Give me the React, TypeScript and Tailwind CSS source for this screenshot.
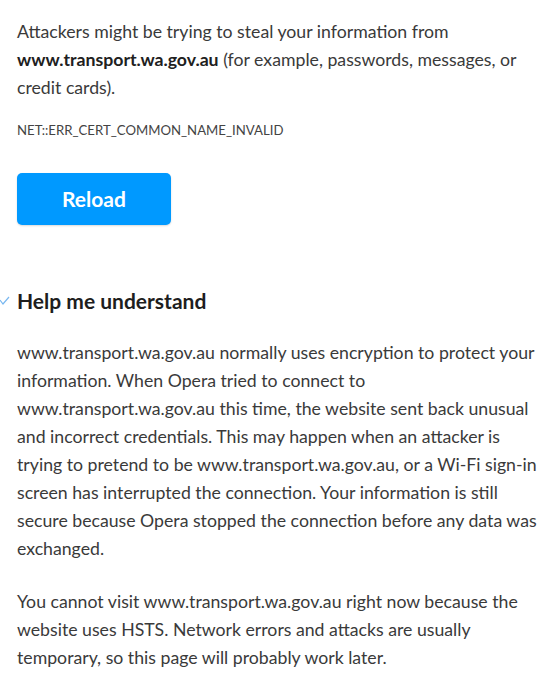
const host = 'www.transport.wa.gov.au';

export default function App() {
  return (
    <div className="min-h-screen bg-white font-['Lato',sans-serif] text-[17.7px] text-[#3a3a3a]">
      <div className="w-[539px] pl-[17px] pt-[18px] pb-8">
        <p className="leading-[28px]">
          Attackers might be trying to steal your information from
          <br />
          <strong className="font-bold text-[#202020]">{host}</strong> (for example, passwords, messages, or
          <br />
          credit cards).
        </p>

        <div className="mt-[18px] text-[13.2px] leading-[20px] text-[#444] uppercase">
          NET::ERR_CERT_COMMON_NAME_INVALID
        </div>

        <button className="mt-[33px] flex h-[52px] w-[154px] items-center justify-center rounded-[5px] bg-[#0099ff] text-[21px] font-bold text-white shadow-[0_1px_2px_rgba(0,0,0,0.15)]">
          Reload
        </button>

        <div className="relative mt-[62px]">
          <svg
            className="absolute left-[-18px] top-[9px]"
            width="12"
            height="12"
            viewBox="0 0 12 12"
            fill="none"
          >
            <polyline points="1,4 4,8 10,1" stroke="#7ab8f0" strokeWidth="1.2" />
          </svg>
          <h2 className="text-[21px] leading-[28px] font-bold text-[#1e1e1e]">Help me understand</h2>
        </div>

        <p className="mt-[24px] leading-[28px]">
          {host} normally uses encryption to protect your
          <br />
          information. When Opera tried to connect to
          <br />
          {host} this time, the website sent back unusual
          <br />
          and incorrect credentials. This may happen when an attacker is
          <br />
          trying to pretend to be {host}, or a Wi-Fi sign-in
          <br />
          screen has interrupted the connection. Your information is still
          <br />
          secure because Opera stopped the connection before any data was
          <br />
          exchanged.
        </p>

        <p className="mt-[25px] leading-[28px]">
          You cannot visit {host} right now because the
          <br />
          website uses HSTS. Network errors and attacks are usually
          <br />
          temporary, so this page will probably work later.
        </p>
      </div>
    </div>
  );
}
